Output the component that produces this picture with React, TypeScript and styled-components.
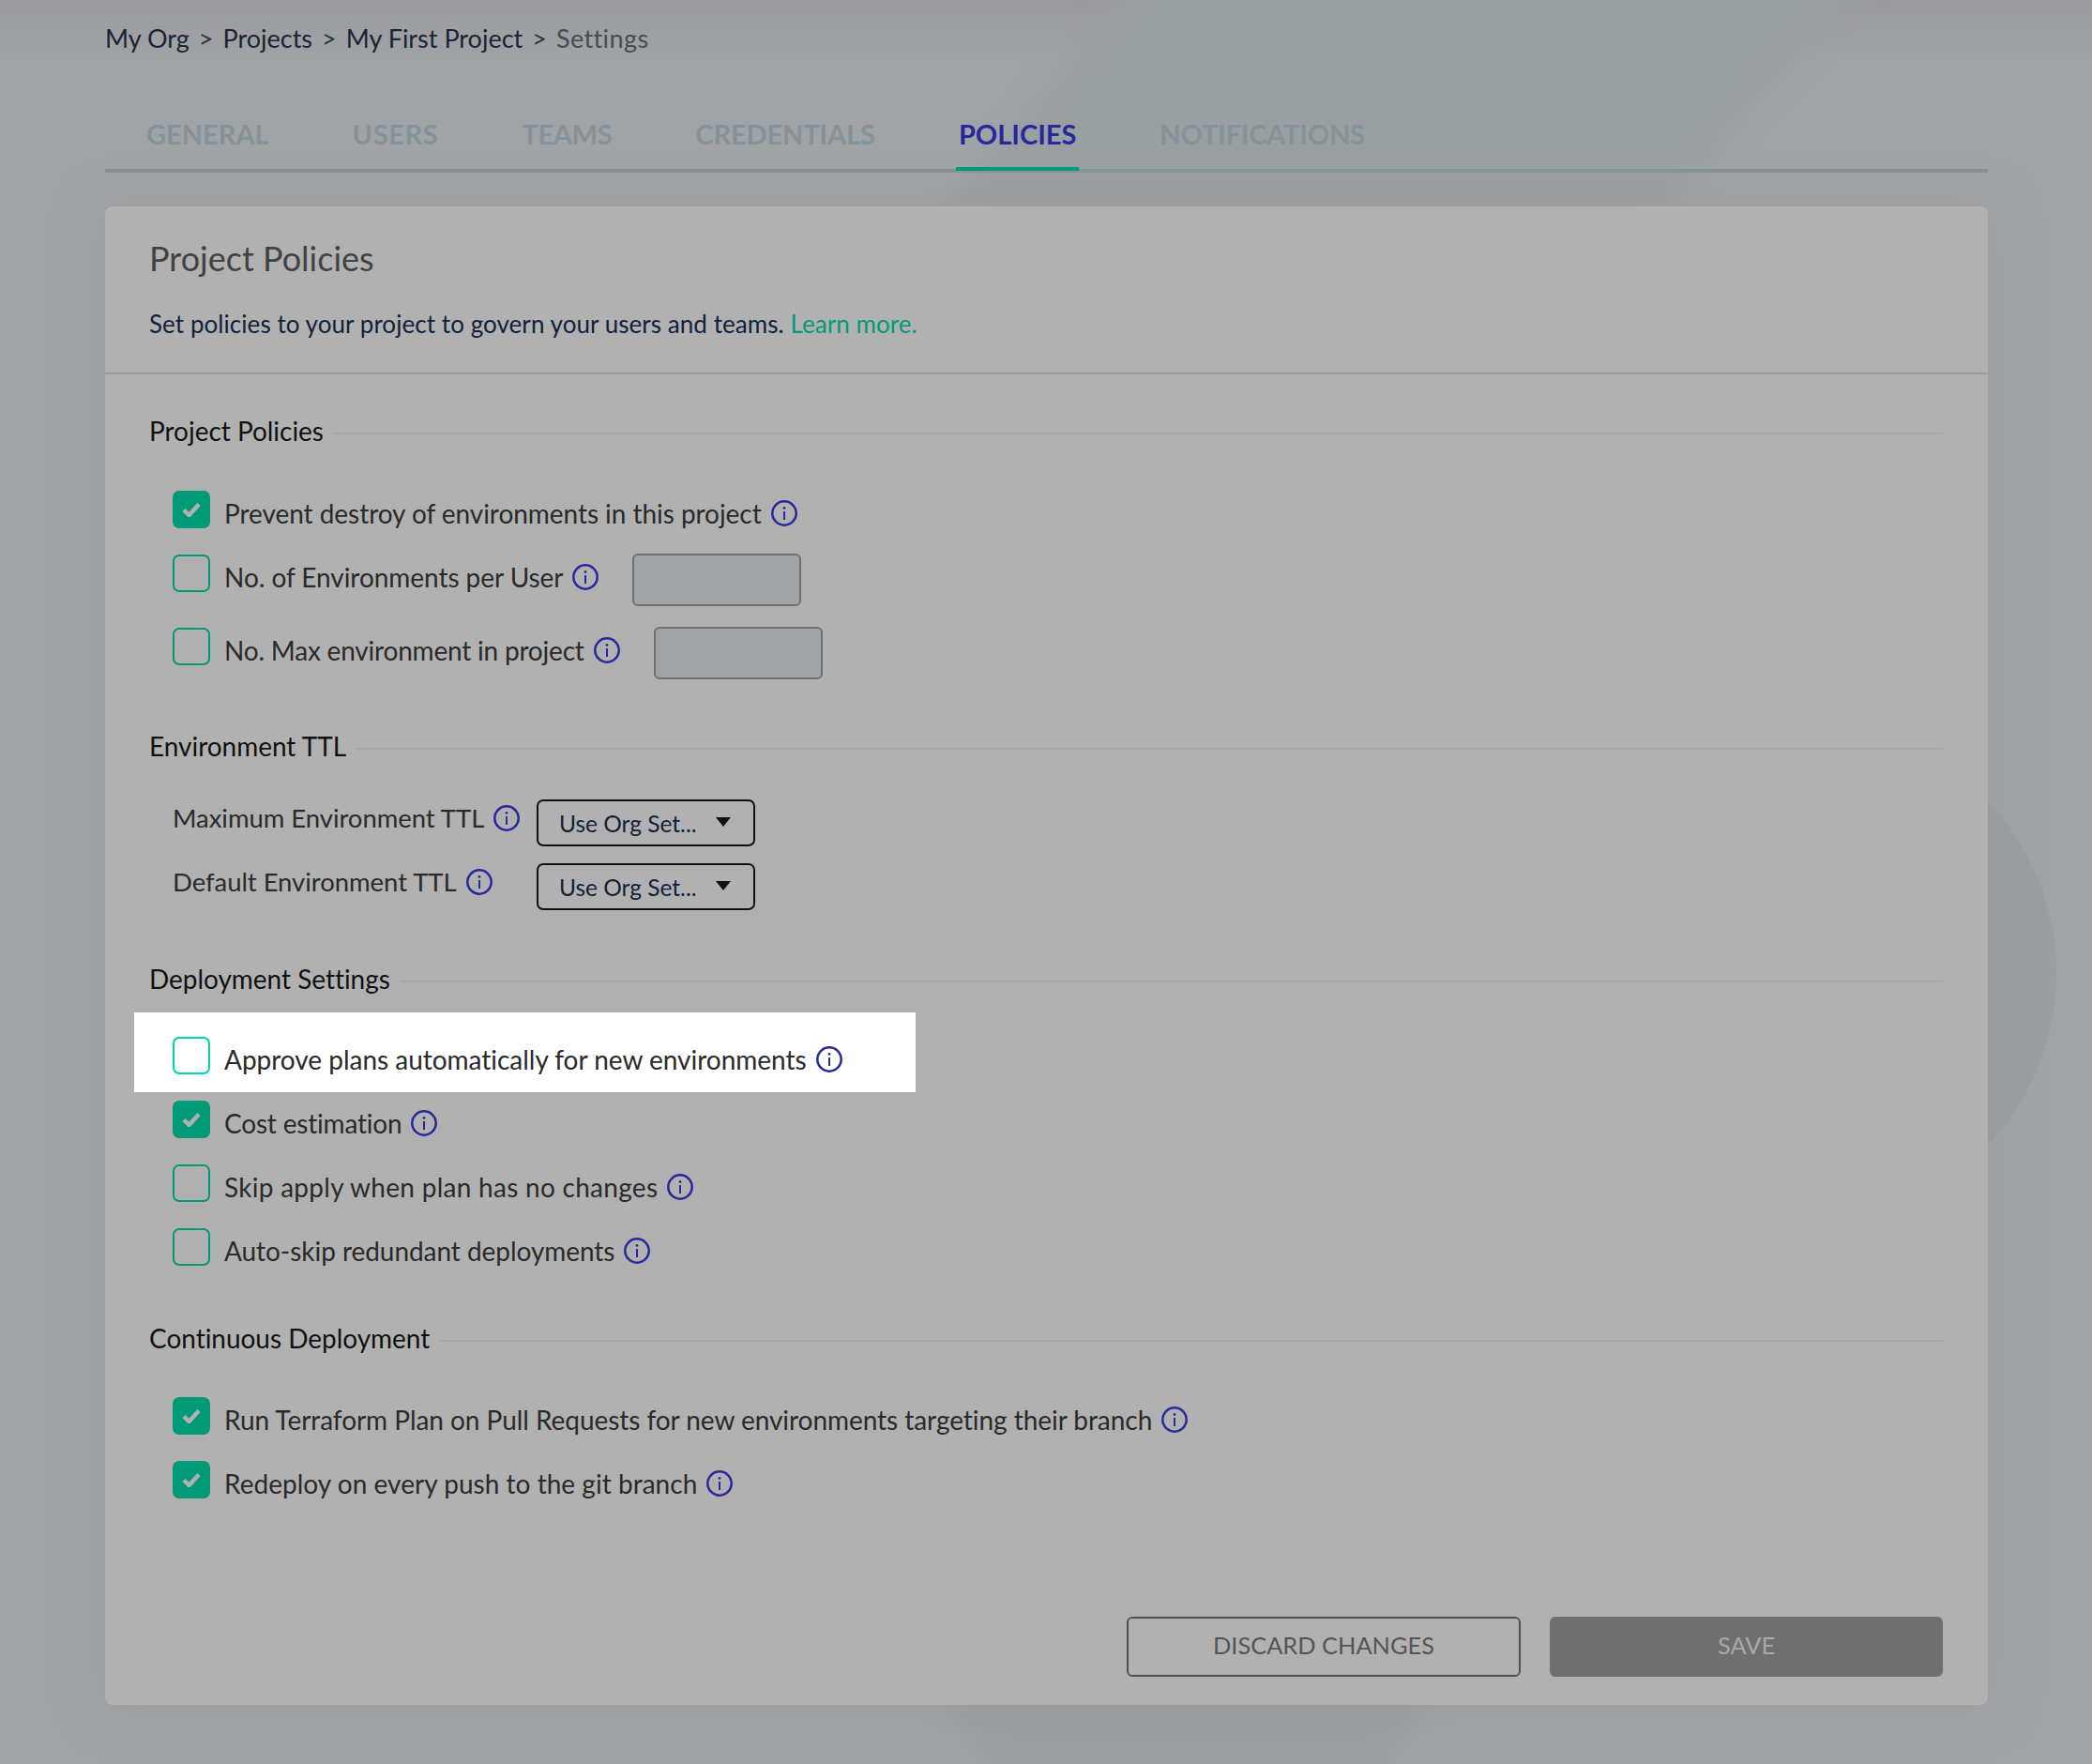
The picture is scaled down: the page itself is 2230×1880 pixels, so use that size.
import React from "react";
import styled, { createGlobalStyle } from "styled-components";

const Global = createGlobalStyle`
  html, body { margin: 0; padding: 0; }
  body { font-family: "Lato", "Liberation Sans", sans-serif; background: #a0a4a7; }
  * { box-sizing: border-box; }
`;

const Page = styled.div`
  position: relative;
  width: 2230px;
  height: 1880px;
  overflow: hidden;
  padding: 0 111px 0 112px;
  background: linear-gradient(180deg, #9b9b9d 0%, #a0a4a7 70px, #a0a4a7 100%);
`;

const Backdrop = styled.svg`
  position: absolute;
  left: 0;
  top: 0;
  width: 2230px;
  height: 1880px;
`;

const SoftShape = styled.path`
  fill: #9a9fa2;
  filter: blur(12px);
`;

const Content = styled.div`
  position: relative;
`;

const Breadcrumb = styled.nav`
  display: flex;
  align-items: center;
  height: 82px;
  padding-bottom: 2px;
  font-size: 27px;
  color: #1a2433;
`;

const Sep = styled.span`
  margin: 0 10px;
  color: #2c3540;
`;

const Current = styled.span`
  letter-spacing: 0.4px;
  color: #484c50;
`;

const TabBar = styled.div`
  display: flex;
  gap: 83px;
  margin-top: 24px;
  padding-left: 41px;
  border-bottom: 4px solid #84929b;
`;

const Tab = styled.div<{ $active?: boolean; $track?: number }>`
  position: relative;
  height: 74px;
  line-height: 74px;
  padding: 0 3px;
  font-size: 29px;
  font-weight: 700;
  letter-spacing: ${(p) => p.$track ?? 0}px;
  color: ${(p) => (p.$active ? "#27289c" : "#84939b")};
  &::after {
    content: "";
    display: ${(p) => (p.$active ? "block" : "none")};
    position: absolute;
    left: 0;
    right: 0;
    bottom: -2px;
    height: 4px;
    background: #009b76;
  }
`;

const Card = styled.section`
  margin-top: 36px;
  width: 2007px;
  height: 1597px;
  background: #b1b1b1;
  border-radius: 8px;
  box-shadow: 0 2px 50px rgba(156, 150, 150, 0.55);
`;

const CardHead = styled.header`
  height: 179px;
  padding: 31px 48px 0;
  border-bottom: 2px solid #999d9f;
`;

const Title = styled.h1`
  margin: 0;
  height: 48px;
  line-height: 48px;
  font-size: 36px;
  font-weight: 400;
  text-indent: -1px;
  color: #424242;
`;

const Sub = styled.p`
  margin: 26px 0 0;
  line-height: 40px;
  font-size: 26px;
  letter-spacing: 0.06px;
  text-indent: -1px;
  color: #10223a;
`;

const Learn = styled.span`
  color: #009b76;
`;

const CardBody = styled.div`
  padding: 40px 48px 30px;
`;

const Heading = styled.div<{ $top?: number }>`
  display: flex;
  align-items: center;
  gap: 11px;
  height: 40px;
  padding-bottom: 1px;
  margin-top: ${(p) => p.$top ?? 0}px;
  font-size: 28px;
  letter-spacing: -0.03px;
  text-indent: -1px;
  color: #111;
  &::after {
    content: "";
    flex: 1;
    height: 2px;
    margin-top: 6px;
    background: #a7a7a7;
  }
`;

const Rows = styled.div<{ $top: number }>`
  margin-top: ${(p) => p.$top}px;
  padding-left: 24px;
`;

const Row = styled.div<{ $tall?: boolean }>`
  display: flex;
  align-items: flex-start;
  height: ${(p) => (p.$tall ? 78 : 68)}px;
`;

const Spotlight = styled.div`
  display: flex;
  align-items: flex-start;
  width: 833px;
  height: 85px;
  margin: 0 0 9px -41px;
  padding: 26px 0 0 41px;
  background: #fff;
`;

const Box = styled.span<{ $checked?: boolean; $bright?: boolean }>`
  flex: none;
  display: flex;
  align-items: center;
  justify-content: center;
  width: 40px;
  height: 40px;
  margin-right: 15px;
  border-radius: 7px;
  border: 2px solid ${(p) => (p.$bright ? "#00d6a8" : "#009b76")};
  background: ${(p) => (p.$checked ? "#009b76" : "transparent")};
`;

const Label = styled.span<{ $track?: number }>`
  line-height: 40px;
  margin-top: 4px;
  font-size: 28px;
  letter-spacing: ${(p) => p.$track ?? -0.05}px;
  color: #2a2a2a;
  white-space: nowrap;
`;

const Info = styled.svg`
  flex: none;
  width: 28px;
  height: 28px;
  margin: 10px 0 0 10px;
`;

const Field = styled.div<{ $gap: number }>`
  width: 180px;
  height: 56px;
  margin: -1px 0 0 ${(p) => p.$gap}px;
  background: #a0a4a6;
  border: 2px solid #707070;
  border-radius: 6px;
`;

const TtlGrid = styled.div`
  display: grid;
  grid-template-columns: 388px 233px;
  grid-auto-rows: 50px;
  row-gap: 18px;
  margin-top: 37px;
  padding-left: 24px;
`;

const TtlLabel = styled.div`
  display: flex;
  align-items: flex-start;
  & > span {
    margin-top: 0;
    font-size: 27.5px;
  }
  & > svg {
    margin-top: 6px;
  }
`;

const Select = styled.div`
  display: flex;
  align-items: center;
  height: 50px;
  padding: 0 24px 0 22px;
  border: 2px solid #111;
  border-radius: 7px;
  font-size: 24.5px;
  color: #10223a;
`;

const Caret = styled.svg`
  width: 16px;
  height: 10px;
  margin: -2px 0 0 auto;
`;

const Actions = styled.div`
  display: flex;
  justify-content: flex-end;
  margin-top: 98px;
`;

const Button = styled.div<{ $primary?: boolean }>`
  display: flex;
  align-items: center;
  justify-content: center;
  width: ${(p) => (p.$primary ? 419 : 420)}px;
  height: 64px;
  margin-left: ${(p) => (p.$primary ? 31 : 0)}px;
  padding-bottom: 4px;
  border-radius: 6px;
  font-size: 25.4px;
  border: 2px solid ${(p) => (p.$primary ? "#6f6f6f" : "#525252")};
  background: ${(p) => (p.$primary ? "#6f6f6f" : "transparent")};
  color: ${(p) => (p.$primary ? "#a9a9a9" : "#555")};
`;

const InfoIcon = () => (
  <Info viewBox="0 0 28 28" fill="none">
    <circle cx="14" cy="14" r="12.7" stroke="#27289c" strokeWidth="2.5" />
    <path d="M14 12v9" stroke="#27289c" strokeWidth="2" />
    <circle cx="14" cy="8.4" r="1.4" fill="#27289c" />
  </Info>
);

const Check = ({ checked, bright }: { checked?: boolean; bright?: boolean }) => (
  <Box $checked={checked} $bright={bright}>
    {checked && (
      <svg width="20" height="16" viewBox="0 0 20 16" fill="none">
        <path d="M2 8.5 7.5 14 18 2.5" stroke="#b1b1b1" strokeWidth="4.5" />
      </svg>
    )}
  </Box>
);

const Option = ({ children, checked, track }: { children: string; checked?: boolean; track?: number }) => (
  <Row>
    <Check checked={checked} />
    <Label $track={track}>{children}</Label>
    <InfoIcon />
  </Row>
);

const Limit = ({ children, track }: { children: string; track?: number }) => (
  <Row $tall>
    <Check />
    <Label $track={track}>{children}</Label>
    <InfoIcon />
    <Field $gap={36} />
  </Row>
);

const Ttl = ({ children }: { children: string }) => (
  <>
    <TtlLabel>
      <Label>{children}</Label>
      <InfoIcon />
    </TtlLabel>
    <Select>
      <span>Use Org Set...</span>
      <Caret viewBox="0 0 16 10">
        <path d="M0 0h16L8 10z" fill="#111" />
      </Caret>
    </Select>
  </>
);

export default function App() {
  return (
    <Page>
      <Global />
      <Backdrop viewBox="0 0 2230 1880">
        <SoftShape d="M1223 -40 H2010 L1778 220 L1522 1817 L1450 1920 H1080 L1010 1817 V220 Z" />
        <circle cx="1926" cy="1037" r="266" fill="#9a9ea1" />
      </Backdrop>
      <Content>
        <Breadcrumb>
          My Org<Sep>&gt;</Sep>Projects<Sep>&gt;</Sep>My First Project<Sep>&gt;</Sep>
          <Current>Settings</Current>
        </Breadcrumb>
        <TabBar>
          <Tab>GENERAL</Tab>
          <Tab $track={0.6}>USERS</Tab>
          <Tab $track={-0.3}>TEAMS</Tab>
          <Tab $track={-0.1}>CREDENTIALS</Tab>
          <Tab $active>POLICIES</Tab>
          <Tab $track={-0.2}>NOTIFICATIONS</Tab>
        </TabBar>
        <Card>
          <CardHead>
            <Title>Project Policies</Title>
            <Sub>
              Set policies to your project to govern your users and teams. <Learn>Learn more.</Learn>
            </Sub>
          </CardHead>
          <CardBody>
            <Heading>Project Policies</Heading>
            <Rows $top={44}>
              <Option checked>Prevent destroy of environments in this project</Option>
              <Limit>No. of Environments per User</Limit>
              <Limit track={-0.2}>No. Max environment in project</Limit>
            </Rows>
            <Heading $top={28}>Environment TTL</Heading>
            <TtlGrid>
              <Ttl>Maximum Environment TTL</Ttl>
              <Ttl>Default Environment TTL</Ttl>
            </TtlGrid>
            <Heading $top={53}>Deployment Settings</Heading>
            <Rows $top={16}>
              <Spotlight>
                <Check bright />
                <Label $track={-0.02}>Approve plans automatically for new environments</Label>
                <InfoIcon />
              </Spotlight>
              <Option checked track={-0.19}>Cost estimation</Option>
              <Option track={0.28}>Skip apply when plan has no changes</Option>
              <Option>Auto-skip redundant deployments</Option>
            </Rows>
            <Heading $top={29}>Continuous Deployment</Heading>
            <Rows $top={43}>
              <Option checked>Run Terraform Plan on Pull Requests for new environments targeting their branch</Option>
              <Option checked track={0.03}>Redeploy on every push to the git branch</Option>
            </Rows>
            <Actions>
              <Button>DISCARD CHANGES</Button>
              <Button $primary>SAVE</Button>
            </Actions>
          </CardBody>
        </Card>
      </Content>
    </Page>
  );
}
